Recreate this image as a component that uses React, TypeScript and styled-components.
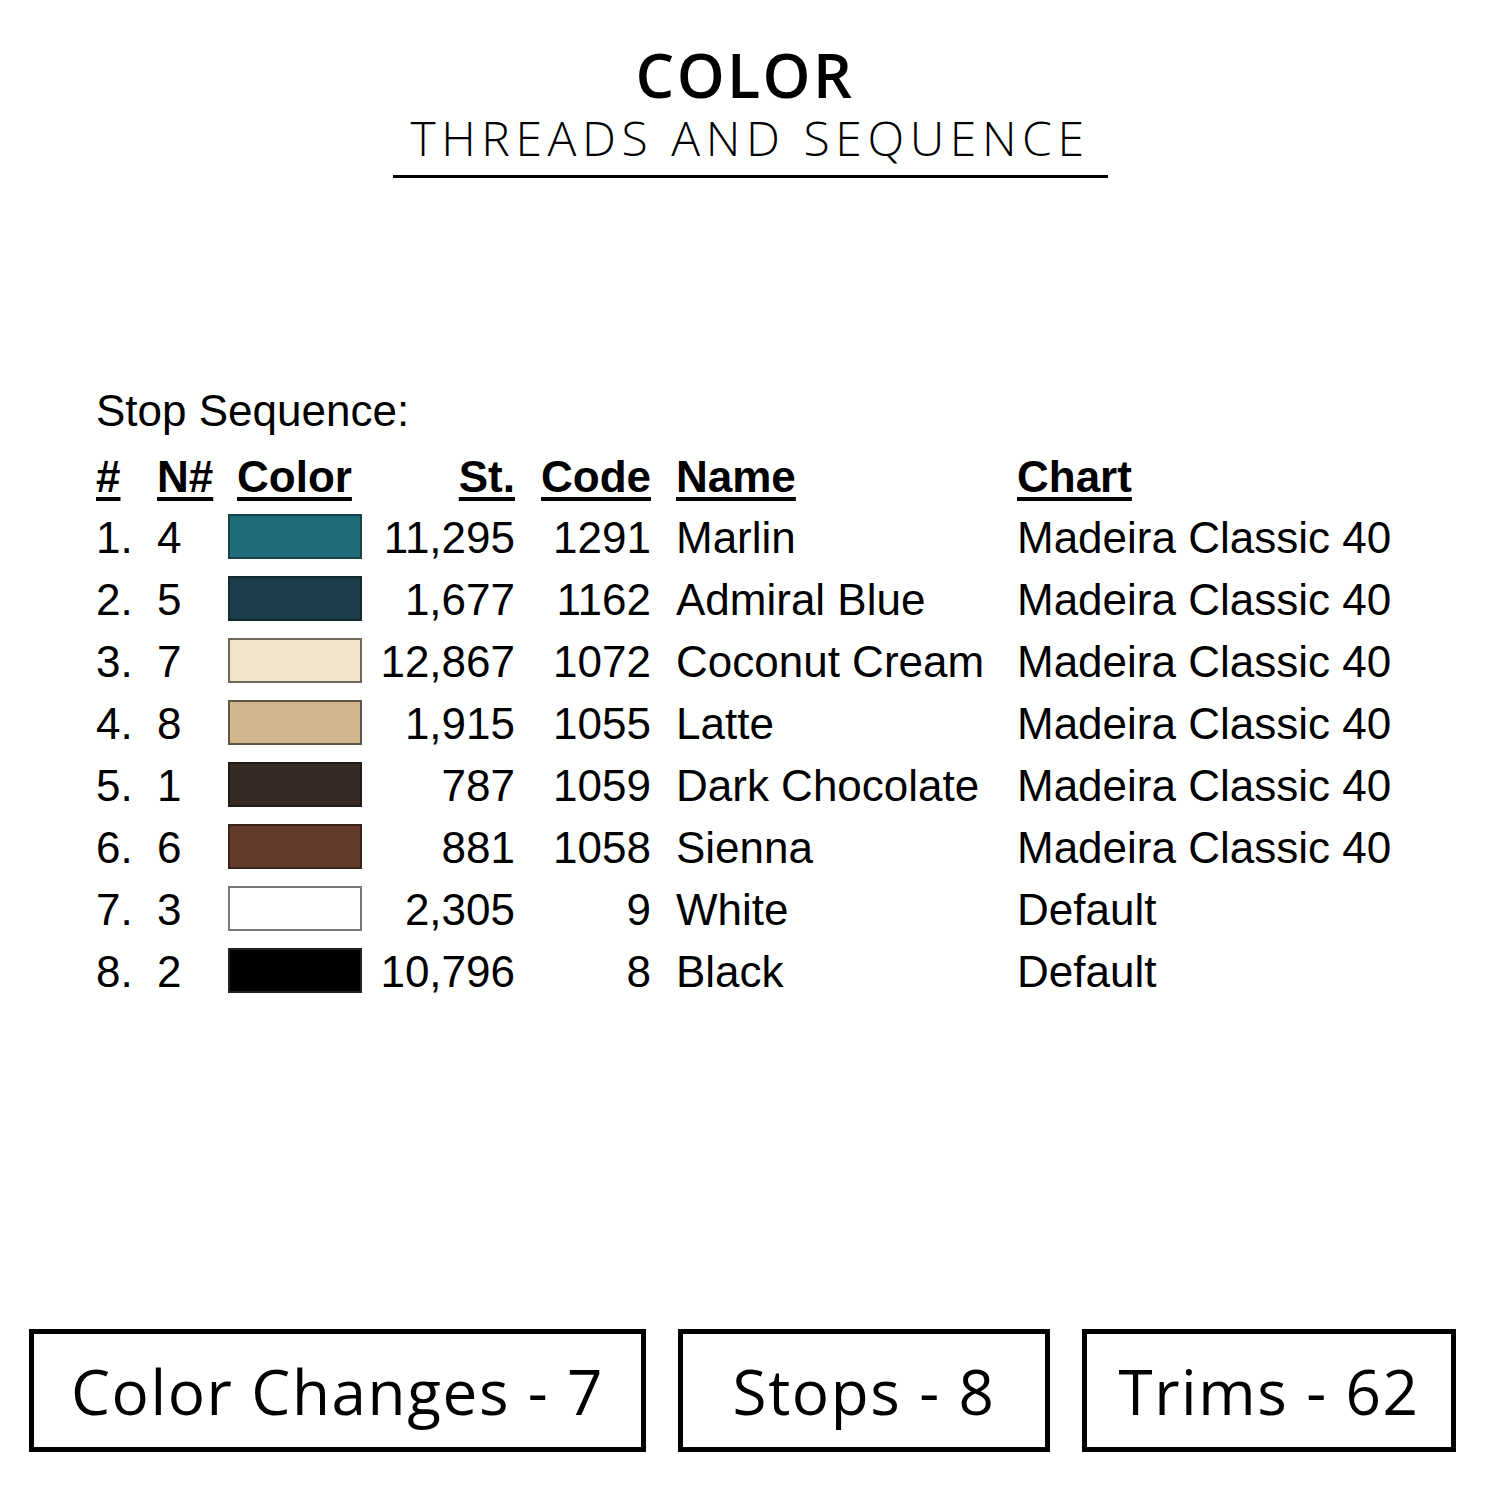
import React from "react";
import styled, { createGlobalStyle } from "styled-components";

const Global = createGlobalStyle`
  html, body { margin: 0; padding: 0; background: #ffffff; }
  #root { width: 1500px; height: 1500px; }
`;

const Page = styled.div`
  width: 1500px;
  height: 1500px;
  box-sizing: border-box;
  background: #ffffff;
  color: #000000;
  display: flex;
  flex-direction: column;
  align-items: stretch;
`;

const Header = styled.header`
  display: flex;
  flex-direction: column;
  align-items: center;
  padding-top: 44px;
`;

const Title = styled.h1`
  margin: 0;
  padding-right: 10px;
  font-family: "Open Sans", "DejaVu Sans", sans-serif;
  font-weight: 600;
  font-size: 61px;
  line-height: 62px;
  letter-spacing: 2.4px;
`;

const Subtitle = styled.h2`
  margin: 4px 0 0;
  width: 715px;
  text-align: center;
  font-family: "Open Sans", "DejaVu Sans", sans-serif;
  font-weight: 300;
  font-size: 48px;
  line-height: 56px;
  letter-spacing: 5.6px;
  border-bottom: 3px solid #000;
  padding-bottom: 9px;
`;

const TableSection = styled.section`
  margin-top: 203px;
  padding-left: 96px;
  font-family: "Liberation Sans", Arial, sans-serif;
  font-size: 44px;
`;

const Caption = styled.div`
  line-height: 60px;
  margin-bottom: 6px;
`;

const Grid = styled.div`
  display: grid;
  grid-template-columns: 61px 71px 134px 153px 136px 366px auto;
  grid-template-rows: 60px;
  grid-auto-rows: 62px;
  align-items: center;
`;

const Th = styled.div<{ $right?: boolean; $indent?: number }>`
  font-weight: 700;
  text-decoration: underline;
  text-decoration-thickness: 4px;
  text-underline-offset: 5px;
  text-align: ${(p) => (p.$right ? "right" : "left")};
  padding-left: ${(p) => p.$indent ?? 0}px;
  white-space: nowrap;
`;

const Td = styled.div<{ $right?: boolean; $indent?: number }>`
  text-align: ${(p) => (p.$right ? "right" : "left")};
  padding-left: ${(p) => p.$indent ?? 0}px;
  white-space: nowrap;
`;

const Swatch = styled.div<{ $color: string; $edge: string }>`
  width: 134px;
  height: 45px;
  box-sizing: border-box;
  background: ${(p) => p.$color};
  border: 2px solid ${(p) => p.$edge};
  margin-top: -4px;
`;

const Stats = styled.footer`
  margin-top: auto;
  padding: 0 43px 48px 29px;
  display: flex;
  gap: 32px;
`;

const StatBox = styled.div<{ $w: number }>`
  width: ${(p) => p.$w}px;
  height: 123px;
  box-sizing: border-box;
  border: 5px solid #000;
  display: flex;
  align-items: center;
  justify-content: center;
  font-family: "Open Sans", "DejaVu Sans", sans-serif;
  font-weight: 500;
  font-size: 62px;
  letter-spacing: 1.6px;
`;

const rows = [
  { n: "1.", nn: "4", color: "#1d6d7b", edge: "#1a4148", st: "11,295", code: "1291", name: "Marlin", chart: "Madeira Classic 40" },
  { n: "2.", nn: "5", color: "#1c3d4a", edge: "#132a31", st: "1,677", code: "1162", name: "Admiral Blue", chart: "Madeira Classic 40" },
  { n: "3.", nn: "7", color: "#f2e4cc", edge: "#6e6658", st: "12,867", code: "1072", name: "Coconut Cream", chart: "Madeira Classic 40" },
  { n: "4.", nn: "8", color: "#d2b68c", edge: "#5f5446", st: "1,915", code: "1055", name: "Latte", chart: "Madeira Classic 40" },
  { n: "5.", nn: "1", color: "#372a25", edge: "#241b18", st: "787", code: "1059", name: "Dark Chocolate", chart: "Madeira Classic 40" },
  { n: "6.", nn: "6", color: "#633b2a", edge: "#3a2419", st: "881", code: "1058", name: "Sienna", chart: "Madeira Classic 40" },
  { n: "7.", nn: "3", color: "#ffffff", edge: "#777777", st: "2,305", code: "9", name: "White", chart: "Default" },
  { n: "8.", nn: "2", color: "#000000", edge: "#222222", st: "10,796", code: "8", name: "Black", chart: "Default" },
];

export default function App() {
  return (
    <Page>
      <Global />
      <Header>
        <Title>COLOR</Title>
        <Subtitle>THREADS AND SEQUENCE</Subtitle>
      </Header>
      <TableSection>
        <Caption>Stop Sequence:</Caption>
        <Grid>
          <Th>#</Th>
          <Th>N#</Th>
          <Th $indent={9}>Color</Th>
          <Th $right>St.</Th>
          <Th $right>Code</Th>
          <Th $indent={25}>Name</Th>
          <Th>Chart</Th>
          {rows.map((r) => (
            <React.Fragment key={r.n}>
              <Td>{r.n}</Td>
              <Td>{r.nn}</Td>
              <Swatch $color={r.color} $edge={r.edge} />
              <Td $right>{r.st}</Td>
              <Td $right>{r.code}</Td>
              <Td $indent={25}>{r.name}</Td>
              <Td>{r.chart}</Td>
            </React.Fragment>
          ))}
        </Grid>
      </TableSection>
      <Stats>
        <StatBox $w={617}>Color Changes - 7</StatBox>
        <StatBox $w={372}>Stops - 8</StatBox>
        <StatBox $w={374}>Trims - 62</StatBox>
      </Stats>
    </Page>
  );
}
